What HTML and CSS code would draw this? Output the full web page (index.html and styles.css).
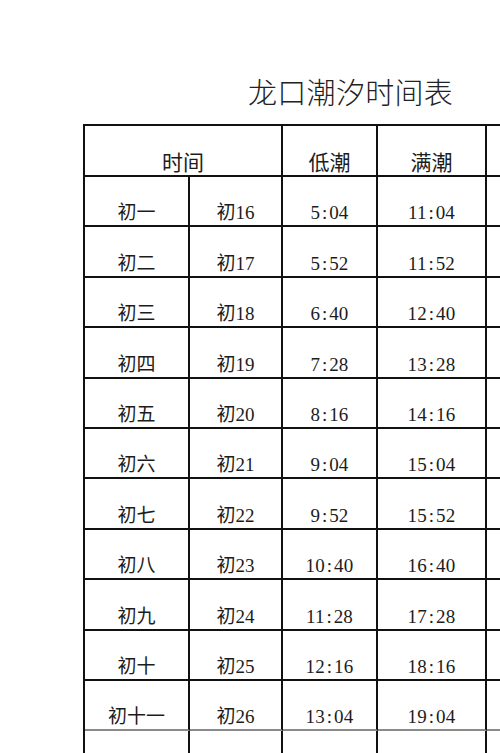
FILE: index.html
```html
<!DOCTYPE html>
<html lang="zh-CN">
<head>
<meta charset="utf-8">
<title>龙口潮汐时间表</title>
<link rel="stylesheet" href="styles.css">
</head>
<body>
<div class="page">
  <h1 class="title">龙口潮汐时间表</h1>
  <div class="grid">
    <div class="cell head span2">时间</div>
    <div class="cell head">低潮</div>
    <div class="cell head">满潮</div>
    <div class="cell head"></div>

    <div class="cell">初一</div><div class="cell">初16</div><div class="cell time">5<span class="colon">:</span>04</div><div class="cell time">11<span class="colon">:</span>04</div><div class="cell"></div>
    <div class="cell">初二</div><div class="cell">初17</div><div class="cell time">5<span class="colon">:</span>52</div><div class="cell time">11<span class="colon">:</span>52</div><div class="cell"></div>
    <div class="cell">初三</div><div class="cell">初18</div><div class="cell time">6<span class="colon">:</span>40</div><div class="cell time">12<span class="colon">:</span>40</div><div class="cell"></div>
    <div class="cell">初四</div><div class="cell">初19</div><div class="cell time">7<span class="colon">:</span>28</div><div class="cell time">13<span class="colon">:</span>28</div><div class="cell"></div>
    <div class="cell">初五</div><div class="cell">初20</div><div class="cell time">8<span class="colon">:</span>16</div><div class="cell time">14<span class="colon">:</span>16</div><div class="cell"></div>
    <div class="cell">初六</div><div class="cell">初21</div><div class="cell time">9<span class="colon">:</span>04</div><div class="cell time">15<span class="colon">:</span>04</div><div class="cell"></div>
    <div class="cell">初七</div><div class="cell">初22</div><div class="cell time">9<span class="colon">:</span>52</div><div class="cell time">15<span class="colon">:</span>52</div><div class="cell"></div>
    <div class="cell">初八</div><div class="cell">初23</div><div class="cell time">10<span class="colon">:</span>40</div><div class="cell time">16<span class="colon">:</span>40</div><div class="cell"></div>
    <div class="cell">初九</div><div class="cell">初24</div><div class="cell time">11<span class="colon">:</span>28</div><div class="cell time">17<span class="colon">:</span>28</div><div class="cell"></div>
    <div class="cell">初十</div><div class="cell">初25</div><div class="cell time">12<span class="colon">:</span>16</div><div class="cell time">18<span class="colon">:</span>16</div><div class="cell"></div>
    <div class="cell last">初十一</div><div class="cell last">初26</div><div class="cell time last">13<span class="colon">:</span>04</div><div class="cell time last">19<span class="colon">:</span>04</div><div class="cell last"></div>
    <div class="cell"></div><div class="cell"></div><div class="cell"></div><div class="cell"></div><div class="cell"></div>
  </div>
</div>
</body>
</html>
```
FILE: styles.css
```css
html, body {
  margin: 0;
  padding: 0;
  overflow: hidden;
  background: #fff;
}

.page {
  width: 500px;
  height: 753px;
  overflow: hidden;
  font-family: "Liberation Serif", "Noto Sans CJK SC", serif;
  color: #1c1c1c;
}

.title {
  margin: 0 0 18px 0;
  padding: 77px 0 0 248px;
  font-family: "Noto Sans CJK SC", sans-serif;
  font-weight: 300;
  font-size: 29px;
  line-height: 29px;
  color: #222;
  letter-spacing: 0.3px;
  white-space: nowrap;
}

.grid {
  margin-left: 83px;
  display: grid;
  grid-template-columns: 105px 93px 95px 109px 100px;
  grid-template-rows: 51px;
  grid-auto-rows: 50.4px;
  border-left: 2px solid #111;
  border-top: 2px solid #111;
  width: max-content;
}

.cell {
  box-sizing: border-box;
  border-right: 2px solid #111;
  border-bottom: 2px solid #111;
  display: flex;
  align-items: flex-end;
  justify-content: center;
  padding-bottom: 3px;
  font-size: 19px;
  line-height: 19px;
  white-space: nowrap;
}

.cell.last {
  border-bottom-color: #8a8a8a;
}

.head {
  font-family: "Noto Sans CJK SC", sans-serif;
  font-size: 21px;
  line-height: 21px;
  padding-bottom: 3px;
}

.span2 {
  grid-column: span 2;
}

.time {
  letter-spacing: 0.2px;
}

.colon {
  display: inline-block;
  width: 9px;
  text-align: center;
}
```
